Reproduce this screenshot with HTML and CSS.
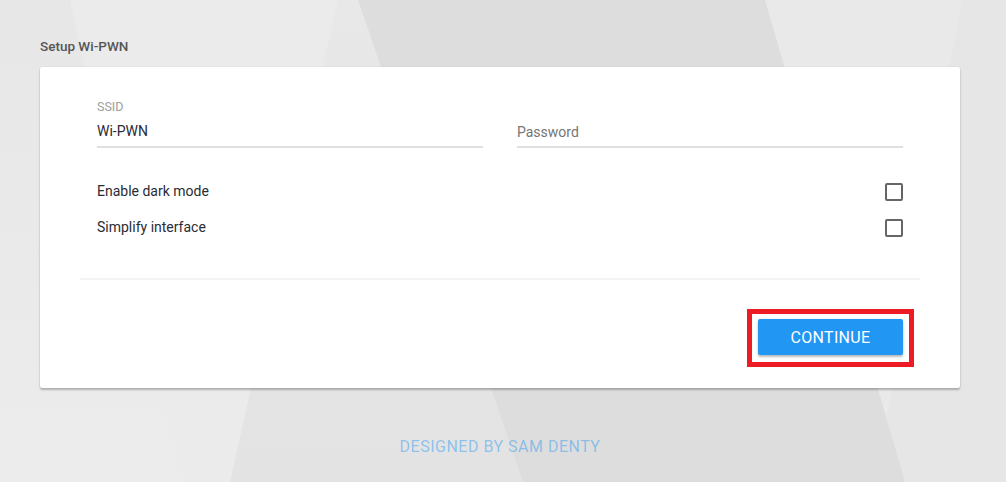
FILE: index.html
```html
<!DOCTYPE html>
<html lang="en">
<head>
<meta charset="utf-8">
<title>Setup Wi-PWN</title>
<link rel="stylesheet" href="styles.css">
</head>
<body>
<svg class="bg" viewBox="0 0 1006 482" preserveAspectRatio="none" aria-hidden="true">
  <defs>
    <linearGradient id="gLeft" x1="0" y1="0" x2="0" y2="1">
      <stop offset="0" stop-color="#e7e7e7"/>
      <stop offset="1" stop-color="#ececec"/>
    </linearGradient>
    <linearGradient id="gMid" x1="0" y1="0" x2="0" y2="1">
      <stop offset="0" stop-color="#e8e8e8"/>
      <stop offset="1" stop-color="#e3e3e3"/>
    </linearGradient>
  </defs>
  <rect x="0" y="0" width="1006" height="482" fill="#eaeaea"/>
  <polygon points="0,0 70,0 180,482 0,482" fill="url(#gLeft)"/>
  <polygon points="70,0 338,0 230,482 180,482" fill="#ebebeb"/>
  <polygon points="338,0 358,0 523,482 230,482" fill="url(#gMid)"/>
  <polygon points="765,0 962,0 875,482 765,482" fill="#e9e9e9"/>
  <polygon points="962,0 1006,0 1006,482 875,482" fill="#e6e6e6"/>
  <polygon points="358,0 765,0 905,482 523,482" fill="#dddddd"/>
</svg>

<main class="page">
  <h1 class="title">Setup Wi-PWN</h1>
  <section class="card">
    <div class="fields">
      <div class="field">
        <span class="field-label">SSID</span>
        <div class="field-input">Wi-PWN</div>
      </div>
      <div class="field">
        <span class="field-label">&nbsp;</span>
        <div class="field-input placeholder">Password</div>
      </div>
    </div>
    <div class="options">
      <div class="option">
        <span class="option-label">Enable dark mode</span>
        <span class="checkbox"></span>
      </div>
      <div class="option">
        <span class="option-label">Simplify interface</span>
        <span class="checkbox"></span>
      </div>
    </div>
    <div class="divider"></div>
    <div class="actions">
      <div class="highlight">
        <button class="btn" type="button">CONTINUE</button>
      </div>
    </div>
  </section>
  <footer class="credit">DESIGNED BY SAM DENTY</footer>
</main>
</body>
</html>
```

FILE: styles.css
```css
html, body {
  margin: 0;
  height: 100%;
}

body {
  position: relative;
  overflow: hidden;
  background: #eaeaea;
  font-family: Roboto, "Liberation Sans", sans-serif;
}

.bg {
  position: absolute;
  top: 0;
  left: 0;
  width: 100%;
  height: 100%;
  z-index: 0;
}

.page {
  position: relative;
  z-index: 1;
  padding: 38px 46px 0 40px;
}

.title {
  margin: 0 0 13px;
  font-size: 13.5px;
  line-height: 16px;
  font-weight: 500;
  color: #555;
}

.card {
  background: #fff;
  border-radius: 2px;
  padding: 33px 40px;
  box-shadow: 0 2px 2px rgba(0, 0, 0, 0.24), 0 0 2px rgba(0, 0, 0, 0.1);
}

.fields {
  display: flex;
  gap: 34px;
  padding: 0 17px;
}

.field {
  flex: 1;
}

.field-label {
  display: block;
  font-size: 12.5px;
  line-height: 14px;
  color: #9e9e9e;
  margin-bottom: 7px;
}

.field-input {
  font-size: 14px;
  line-height: 20px;
  color: #2b2b33;
  padding-bottom: 5px;
  border-bottom: 2px solid #e0e0e0;
}

.field-input.placeholder {
  color: #757575;
  padding-top: 1px;
  padding-bottom: 4px;
}

.options {
  padding: 26px 17px 32px;
}

.option {
  display: flex;
  align-items: center;
  justify-content: space-between;
  height: 36px;
  font-size: 14px;
  color: #2b2b33;
}

.option-label {
  line-height: 20px;
  padding-bottom: 2px;
}

.checkbox {
  width: 18px;
  height: 18px;
  box-sizing: border-box;
  border: 2px solid #666;
  border-radius: 2px;
}

.divider {
  border-top: 2px solid #f4f4f4;
}

.actions {
  display: flex;
  justify-content: flex-end;
  padding: 39px 17px 0;
}

.highlight {
  position: relative;
  display: flex;
}

.highlight::after {
  content: "";
  position: absolute;
  top: -10px;
  right: -11px;
  bottom: -12px;
  left: -11px;
  border: 5px solid #ed1c24;
  pointer-events: none;
}

.btn {
  width: 145px;
  height: 36px;
  padding: 0;
  border: 0;
  border-radius: 2px;
  background: #2196f3;
  color: #fff;
  font-family: Roboto, "Liberation Sans", sans-serif;
  font-size: 16px;
  letter-spacing: 0.3px;
  box-shadow: 0 2px 2px rgba(0, 0, 0, 0.2), 0 1px 4px rgba(0, 0, 0, 0.12);
}

.credit {
  margin-top: 49px;
  text-align: center;
  font-size: 16px;
  line-height: 20px;
  letter-spacing: 0.5px;
  color: rgba(33, 150, 243, 0.45);
}
```
